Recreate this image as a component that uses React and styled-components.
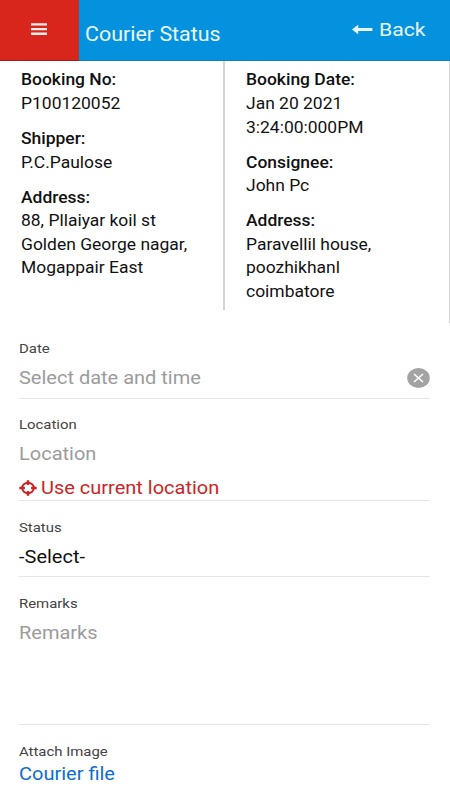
import { createGlobalStyle } from "styled-components";
import styled from "styled-components";

const GlobalStyle = createGlobalStyle`
  * {
    box-sizing: border-box;
  }

  body {
    margin: 0;
    background: #fff;
    color: #111;
    font-family: Roboto, "Liberation Sans", sans-serif;
    overflow: hidden;
  }
`;

const Screen = styled.main`
  display: flex;
  flex-direction: column;
  width: 450px;
  height: 800px;
  overflow: hidden;
`;

// Text is set wider than its natural proportions
const Wide = styled.span`
  display: inline-block;
  white-space: nowrap;
  transform: scaleX(1.105);
  transform-origin: left center;
`;

const Header = styled.header`
  display: flex;
  flex: none;
  height: 61px;
  background: #0492df;
  border-bottom: 1px solid #147fc0;
  color: #e9f8ff;
`;

const MenuButton = styled.div`
  display: flex;
  width: 79px;
  height: 61px;
  padding: 23px 0 0 31px;
  background: #d9261c;
  border-bottom: 1px solid #a81c18;
`;

const Title = styled.div`
  flex: 1;
  padding: 23px 0 0 6px;
  font-size: 19.4px;
  line-height: 24px;
`;

const BackLink = styled.div`
  display: flex;
  width: 99px;
  padding-top: 18px;
  gap: 5.5px;
  font-size: 19.2px;
  line-height: 24px;
`;

const BackIcon = styled.svg`
  flex: none;
  margin-top: 5px;
`;

const Details = styled.section`
  display: flex;
  flex: none;
  align-items: flex-start;
  height: 262px;
`;

const Column = styled.div`
  width: ${(props) => props.$width};
  height: ${(props) => props.$height};
  padding: 7.4px 0 0 ${(props) => props.$inset};
  border-right: ${(props) => props.$rule} solid #d3d3d5;
`;

const Detail = styled.div`
  display: flex;
  flex-direction: column;
  align-items: flex-start;
  margin-bottom: 11.4px;
  font-size: 15.8px;
  line-height: 23.6px;
`;

const DetailLabel = styled(Wide)`
  font-weight: 500;
`;

const Form = styled.section`
  display: flex;
  flex-direction: column;
  padding: 0 20px 0 19px;
`;

const Field = styled.div`
  display: flex;
  flex-direction: column;
  flex: none;
  height: ${(props) => props.$height};
  padding-top: ${(props) => props.$top || "17px"};
  border-bottom: 1px solid #e6e6e6;
`;

const Label = styled.div`
  color: #444;
  font-size: 13.5px;
  line-height: 16px;
`;

const Value = styled.div`
  display: flex;
  justify-content: space-between;
  align-items: center;
  margin-top: ${(props) => props.$gap || "10px"};
  color: ${(props) => props.$color || "#9b9b9b"};
  font-size: 18.1px;
  line-height: 24px;
`;

const LocateLink = styled.div`
  display: flex;
  align-items: center;
  gap: 4px;
  margin-top: 10px;
  color: #cb2427;
  font-size: 18.1px;
  line-height: 24px;
`;

const shipperDetails = [
  { label: "Booking No:", lines: ["P100120052"] },
  { label: "Shipper:", lines: ["P.C.Paulose"] },
  {
    label: "Address:",
    lines: ["88, Pllaiyar koil st", "Golden George nagar,", "Mogappair East"],
  },
];

const consigneeDetails = [
  { label: "Booking Date:", lines: ["Jan 20 2021", "3:24:00:000PM"] },
  { label: "Consignee:", lines: ["John Pc"] },
  { label: "Address:", lines: ["Paravellil house,", "poozhikhanl", "coimbatore"] },
];

function DetailList({ items }) {
  return items.map((item) => (
    <Detail key={item.label}>
      <DetailLabel>{item.label}</DetailLabel>
      {item.lines.map((line) => (
        <Wide key={line}>{line}</Wide>
      ))}
    </Detail>
  ));
}

function MenuIcon() {
  return (
    <svg width="16" height="13" viewBox="0 0 16 13" fill="#fbeceb">
      <path d="M0 .2h16v2.4H0zM0 4.9h16v2.4H0zM0 9.6h16v2.4H0z" />
    </svg>
  );
}

function ClearIcon() {
  return (
    <svg width="24" height="22" viewBox="0 0 24 22">
      <ellipse cx="12.5" cy="11" rx="11.3" ry="10" fill="#a3a3a3" />
      <path d="M8 7l9 8M17 7l-9 8" stroke="#fff" strokeWidth="1.6" />
    </svg>
  );
}

function LocateIcon() {
  return (
    <svg width="18" height="16" viewBox="0 0 18 16" fill="none">
      <ellipse cx="9" cy="8" rx="5.8" ry="5.2" stroke="currentColor" strokeWidth="2" />
      <path
        d="M9 .2v4.9M9 10.9v4.9M.3 8h5.6M12.1 8h5.6"
        stroke="currentColor"
        strokeWidth="2.5"
      />
    </svg>
  );
}

export default function App() {
  return (
    <Screen>
      <GlobalStyle />
      <Header>
        <MenuButton>
          <MenuIcon />
        </MenuButton>
        <Title>
          <Wide>Courier Status</Wide>
        </Title>
        <BackLink>
          <BackIcon width="22" height="13" viewBox="0 0 22 13" fill="currentColor">
            <path d="M1 6.5L7.2 1.8v3.3h14.2v2.8H7.2v3.3z" />
          </BackIcon>
          <Wide>Back</Wide>
        </BackLink>
      </Header>
      <Details>
        <Column $width="225px" $height="249px" $inset="20.5px" $rule="2px">
          <DetailList items={shipperDetails} />
        </Column>
        <Column $width="225px" $height="262px" $inset="21px" $rule="1px">
          <DetailList items={consigneeDetails} />
        </Column>
      </Details>
      <Form>
        <Field $height="76px">
          <Label>
            <Wide>Date</Wide>
          </Label>
          <Value>
            <Wide>Select date and time</Wide>
            <ClearIcon />
          </Value>
        </Field>
        <Field $height="102px">
          <Label>
            <Wide>Location</Wide>
          </Label>
          <Value>
            <Wide>Location</Wide>
          </Value>
          <LocateLink>
            <LocateIcon />
            <Wide>Use current location</Wide>
          </LocateLink>
        </Field>
        <Field $height="76px" $top="18px">
          <Label>
            <Wide>Status</Wide>
          </Label>
          <Value $color="#111">
            <Wide>-Select-</Wide>
          </Value>
        </Field>
        <Field $height="148px" $top="18px">
          <Label>
            <Wide>Remarks</Wide>
          </Label>
          <Value>
            <Wide>Remarks</Wide>
          </Value>
        </Field>
        <Field $height="76px" $top="18px">
          <Label>
            <Wide>Attach Image</Wide>
          </Label>
          <Value $color="#0a6ed1" $gap="3px">
            <Wide>Courier file</Wide>
          </Value>
        </Field>
      </Form>
    </Screen>
  );
}
